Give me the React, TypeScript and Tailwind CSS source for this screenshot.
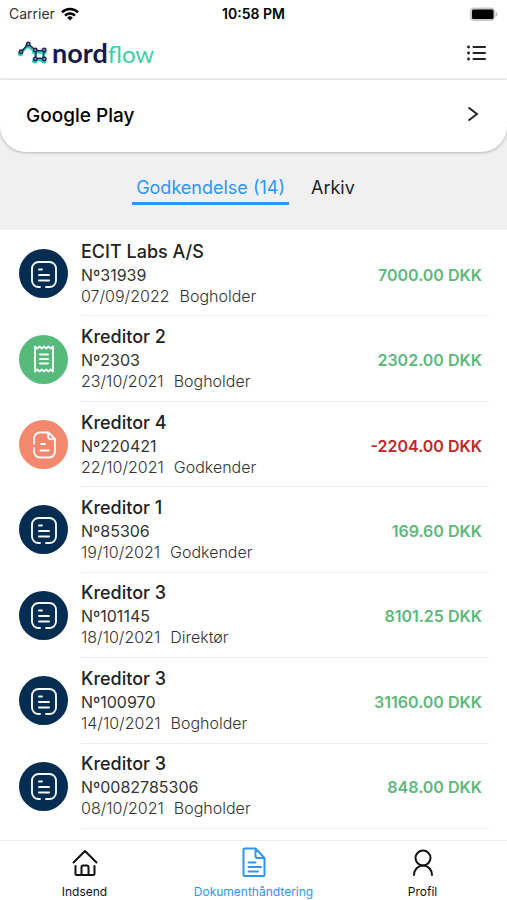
import { ReactNode, useState } from "react";

type Kind = "voucher" | "receipt" | "credit";

interface Doc {
  name: string;
  no: string;
  date: string;
  role: string;
  amount: string;
  kind: Kind;
}

const docs: Doc[] = [
  { name: "ECIT Labs A/S", no: "31939", date: "07/09/2022", role: "Bogholder", amount: "7000.00", kind: "voucher" },
  { name: "Kreditor 2", no: "2303", date: "23/10/2021", role: "Bogholder", amount: "2302.00", kind: "receipt" },
  { name: "Kreditor 4", no: "220421", date: "22/10/2021", role: "Godkender", amount: "-2204.00", kind: "credit" },
  { name: "Kreditor 1", no: "85306", date: "19/10/2021", role: "Godkender", amount: "169.60", kind: "voucher" },
  { name: "Kreditor 3", no: "101145", date: "18/10/2021", role: "Direktør", amount: "8101.25", kind: "voucher" },
  { name: "Kreditor 3", no: "100970", date: "14/10/2021", role: "Bogholder", amount: "31160.00", kind: "voucher" },
  { name: "Kreditor 3", no: "0082785306", date: "08/10/2021", role: "Bogholder", amount: "848.00", kind: "voucher" },
];

const kindBg: Record<Kind, string> = {
  voucher: "bg-[#052d52]",
  receipt: "bg-[#57ba7c]",
  credit: "bg-[#f4886f]",
};

const kindIcon: Record<Kind, ReactNode> = {
  voucher: (
    <>
      <path d="M10 27H8.500a6.500 6.500 0 0 1-6.500-6.500V8.500A6.500 6.500 0 0 1 8.500 2h11A6.500 6.500 0 0 1 26 8.500v12a6.500 6.500 0 0 1-6.500 6.500H16" />
      <path d="M9 9.500h3M9 15h10M9 20.500h10" />
    </>
  ),
  receipt: (
    <path d="M5 1.500l2.200 2 2.300-2 2.200 2 2.300-2 2.300 2 2.200-2 2.300 2 2.200-2v25l-2.200-2-2.300 2-2.200-2-2.300 2-2.300-2-2.200 2-2.300-2-2.200 2zM10 9.500h8M10 14h8M10 18.500h8" />
  ),
  credit: (
    <>
      <path d="M4 13V7.500A6 6 0 0 1 10 1.500h8.500l6.500 6.500v12.500a6 6 0 0 1-6 6H10a6 6 0 0 1-6-6v-3.500" />
      <path d="M17.500 1.500c1.500 1.500-.5 6 2 6.500s4-.5 5.500 1M11 13h4M10.500 19.500h8" />
    </>
  ),
};

function DocIcon({ kind }: { kind: Kind }) {
  return (
    <div className={`flex size-[49px] shrink-0 items-center justify-center rounded-full ${kindBg[kind]}`}>
      <svg
        className="size-7"
        viewBox="0 0 28 28"
        fill="none"
        stroke="#f4f8fb"
        strokeWidth="1.900"
        strokeLinecap="round"
        strokeLinejoin="round"
      >
        {kindIcon[kind]}
      </svg>
    </div>
  );
}

const nodes = [
  [3, 10.7],
  [10.3, 3],
  [17.3, 9],
  [26.3, 9],
  [17.3, 18],
  [26.3, 18],
];

function Logo() {
  const links = "M3 10.700 10.300 3 17.300 9q4.500 1.500 9 0q-1.500 4.500 0 9q-4.500-1.500-9 0q1.500-4.500 0-9";

  return (
    <div className="flex items-center gap-1">
      <svg className="h-6 w-[30px]" viewBox="0 0 30 24" fill="none">
        <g stroke="#2cc9b2" strokeWidth="2.500" transform="translate(-0.500 1.800)">
          <path d={links} />
          {nodes.map(([x, y]) => (
            <circle key={`${x}-${y}`} cx={x} cy={y} r="1.500" />
          ))}
        </g>
        <g stroke="#1b2050" strokeWidth="1.400">
          <path d={links} />
          {nodes.map(([x, y]) => (
            <circle key={`${x}-${y}`} cx={x} cy={y} r="1.700" fill="#8fa6b8" />
          ))}
        </g>
      </svg>
      <span className="font-[Lato,sans-serif] text-[27px] leading-7 font-bold text-[#17194a]">
        nord<span className="text-2xl leading-7 font-normal text-[#3ccfa4]">flow</span>
      </span>
    </div>
  );
}

function StatusBar() {
  return (
    <div className="grid h-7 grid-cols-3 items-center px-[9px] text-sm">
      <div className="flex items-center gap-[6px]">
        <span className="text-[#333]">Carrier</span>
        <svg className="h-[14px] w-[18px]" viewBox="0 0 18 14" fill="none" stroke="black" strokeWidth="2.500">
          <path d="M1 5.300a11.500 11.500 0 0 1 16 0M4 8.600a7.200 7.200 0 0 1 10 0" />
          <path d="M9 13.500 6.200 10.700a4 4 0 0 1 5.600 0z" fill="black" stroke="none" />
        </svg>
      </div>
      <span className="text-center font-semibold text-black">10:58 PM</span>
      <svg className="h-[15px] w-[31px] justify-self-end" viewBox="0 0 31 15">
        <rect x="3" y="0.500" width="25" height="13.500" rx="4" fill="#c9c9c9" />
        <rect x="5" y="2.500" width="21.500" height="9.500" rx="1.500" fill="black" />
        <path d="M28.500 5c2.500 1 2.500 4 0 5z" fill="#b5b5b5" />
      </svg>
    </div>
  );
}

const navItems = [
  {
    label: "Indsend",
    icon: <path d="M2.500 15.500 14 4l11.500 11.500M4.500 19v8q0 1 1 1h17q1 0 1-1v-8M10.500 28v-8q0-1.500 1.500-1.500h4q1.500 0 1.500 1.500v8" />,
  },
  {
    label: "Dokumenthåndtering",
    icon: (
      <path d="M4.500 1.500h11L24.500 11v17q0 1-1 1h-19q-1 0-1-1V2.500q0-1 1-1zM15.500 1.500V9q0 2 2 2h7M8.500 15.500h7M8.500 20h12.500M8.500 24.500h9.500" />
    ),
  },
  {
    label: "Profil",
    icon: (
      <>
        <circle cx="14" cy="11" r="7.500" />
        <path d="M5 28a9 9.500 0 0 1 18 0" />
      </>
    ),
  },
];

export default function App() {
  const [tab, setTab] = useState(0);
  const [page, setPage] = useState(1);

  return (
    <div className="flex min-h-screen flex-col bg-white font-[Inter,sans-serif] text-[#222]">
      <StatusBar />

      <header className="flex h-[50px] items-center justify-between pr-5 pl-[18px]">
        <Logo />
        <button aria-label="Menu">
          <svg className="h-[18px] w-5" viewBox="0 0 20 18" stroke="#222" strokeWidth="2" strokeLinecap="round">
            <path d="M6.500 3h11.500M6.500 9h11.500M6.500 15h11.500" />
            <path d="M1.500 3h.1M1.500 9h.1M1.500 15h.1" strokeWidth="2.800" />
          </svg>
        </button>
      </header>

      <div className="bg-[#f0f0f0] pt-[2px]">
        <button className="flex h-[72px] w-full items-center justify-between rounded-b-[26px] bg-white pr-7 pl-[26px] shadow-[0_1px_3px_rgba(0,0,0,0.25)]">
          <span className="text-[19px] font-medium text-black">Google Play</span>
          <svg className="mb-1 h-4 w-3" viewBox="0 0 12 16" fill="none" stroke="#222" strokeWidth="1.900">
            <path d="M1.500 1.500 10 8l-8.500 6.500" />
          </svg>
        </button>

        <div className="flex h-[78px] items-start justify-center gap-[18px] pt-6 pr-4">
          {["Godkendelse (14)", "Arkiv"].map((label, i) => (
            <button
              key={label}
              onClick={() => setTab(i)}
              className={`border-b-[3px] px-1 pb-[2px] text-lg leading-6 ${
                tab === i ? "border-[#2f95f5] text-[#2f95f5]" : "border-transparent text-[#222]"
              }`}
            >
              {label}
            </button>
          ))}
        </div>
      </div>

      <ul className="grid flex-1 auto-rows-fr pt-px pb-[11px]">
        {docs.map((doc) => (
          <li key={doc.no} className="flex items-center gap-[13px] pr-[18px] pl-[19px]">
            <DocIcon kind={doc.kind} />
            <div className="flex h-full min-w-0 flex-1 items-center justify-between border-b border-[#ededed] pr-[7px]">
              <div>
                <h2 className="text-lg leading-6 font-medium">{doc.name}</h2>
                <p className="text-base leading-[22px] text-[#333]">Nº{doc.no}</p>
                <p className="flex gap-[10px] text-base leading-[21px] font-light text-[#333]">
                  <span>{doc.date}</span>
                  <span>{doc.role}</span>
                </p>
              </div>
              <span
                className={`pt-[3px] text-base font-semibold ${
                  doc.amount.startsWith("-") ? "text-[#c02626]" : "text-[#5cb87d]"
                }`}
              >
                {doc.amount} DKK
              </span>
            </div>
          </li>
        ))}
      </ul>

      <nav className="grid h-[60px] grid-cols-3 border-t border-[#ececec]">
        {navItems.map((item, i) => (
          <button
            key={item.label}
            onClick={() => setPage(i)}
            className={`flex flex-col items-center gap-[7px] pt-[6px] ${page === i ? "text-[#2f95f5]" : "text-[#111]"}`}
          >
            <svg
              className="h-[30px] w-7"
              viewBox="0 0 28 30"
              fill="none"
              stroke="currentColor"
              strokeWidth="2"
              strokeLinecap="round"
              strokeLinejoin="round"
            >
              {item.icon}
            </svg>
            <span className="text-xs leading-4">{item.label}</span>
          </button>
        ))}
      </nav>
    </div>
  );
}
